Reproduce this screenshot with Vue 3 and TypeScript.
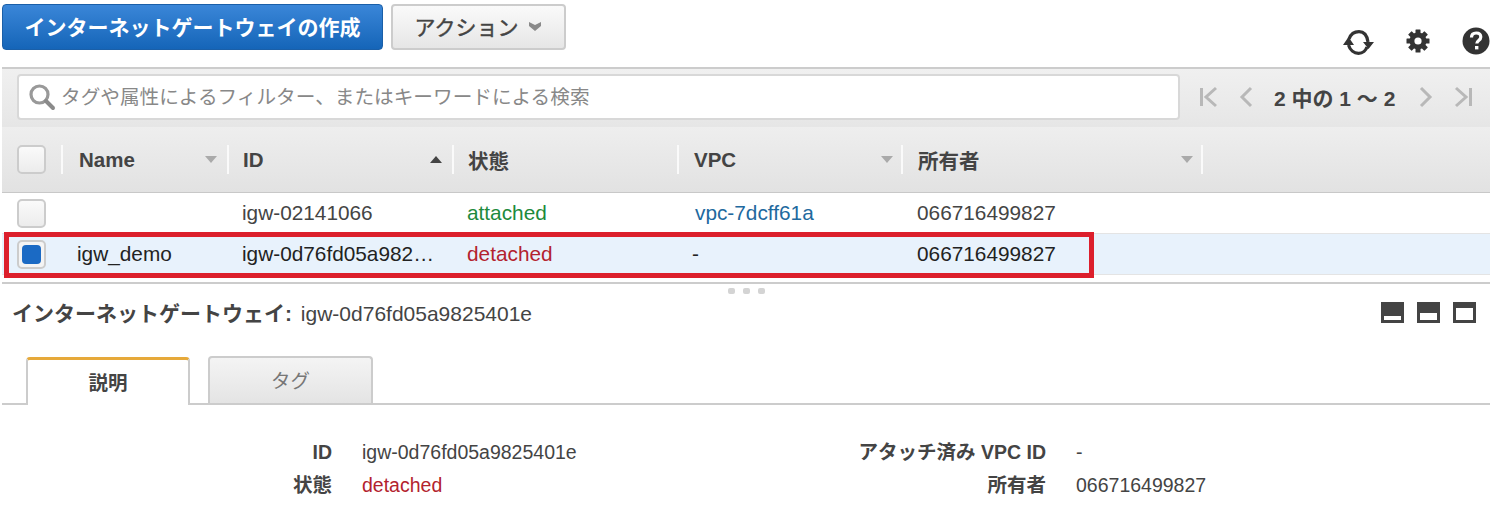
<template>
  <div class="page">
    <div class="toolbar">
      <button class="btn primary">インターネットゲートウェイの作成</button>
      <button class="btn plain">
        アクション
        <svg width="14" height="11" viewBox="0 0 14 11"><path d="M1 1 7 4l6-3v4l-6 5-6-5z" fill="#8a8a8a" /></svg>
      </button>
      <div class="tools">
        <svg class="refresh" width="31" height="25" viewBox="0 0 31 25" fill="none">
          <path d="M6 9C8 3.500 12 1.700 16 1.700c5 0 8 3.300 9 10.300" stroke="#333" stroke-width="3.200" />
          <path d="M5.500 15c1.500 5 5.500 8.300 10 8.300s7.500-3.300 8.500-6.300" stroke="#333" stroke-width="3.200" />
          <path d="M20 12h11l-5.500 7zM0 15h11L5.500 7z" fill="#333" />
        </svg>
        <svg class="gear" width="24" height="24" viewBox="0 0 24 24">
          <rect v-for="a in gearTeeth" :key="a" x="9.500" y="0.500" width="5" height="23" rx="0.500" fill="#333" :transform="`rotate(${a} 12 12)`" />
          <circle cx="12" cy="12" r="8.500" fill="#333" />
          <circle cx="12" cy="12" r="3.600" fill="#fff" />
        </svg>
        <svg class="help" width="28" height="28" viewBox="0 0 28 28">
          <circle cx="14" cy="14" r="13.500" fill="#333" />
          <path d="M9.500 10.500c0-3 2-4.500 4.700-4.500s4.600 1.500 4.600 4c0 3.600-4 3.400-4 6.500" fill="none" stroke="#fff" stroke-width="3.200" />
          <rect x="13" y="19" width="3.400" height="3.400" fill="#fff" />
        </svg>
      </div>
    </div>

    <div class="filter">
      <div class="search">
        <svg width="28" height="28" viewBox="0 0 28 28" fill="none">
          <circle cx="11.500" cy="11.500" r="8.500" stroke="#999" stroke-width="3.200" />
          <path d="M18 18l7 7" stroke="#8a8a8a" stroke-width="4" stroke-linecap="round" />
        </svg>
        <span>タグや属性によるフィルター、またはキーワードによる検索</span>
      </div>
      <div class="pager">
        <svg width="20" height="22" viewBox="0 0 20 22" fill="none" stroke="#b8b8b8" stroke-width="3"><path d="M2.500 2v18M17 2 7 11l10 9" /></svg>
        <svg class="prev" width="14" height="22" viewBox="0 0 14 22" fill="none" stroke="#b8b8b8" stroke-width="3"><path d="M12 2 3 11l9 9" /></svg>
        <b>2 中の 1 ～ 2</b>
        <svg class="next" width="14" height="22" viewBox="0 0 14 22" fill="none" stroke="#b8b8b8" stroke-width="3"><path d="m2 2 9 9-9 9" /></svg>
        <svg width="20" height="22" viewBox="0 0 20 22" fill="none" stroke="#b8b8b8" stroke-width="3"><path d="M17.500 2v18M3 2l10 9-10 9" /></svg>
      </div>
    </div>

    <div class="table">
      <div class="thead grid">
        <div class="cell check"><i class="box"></i></div>
        <div v-for="c in columns" :key="c.label" class="cell th">
          <span>{{ c.label }}</span>
          <i v-if="c.caret" class="caret" :class="c.caret"></i>
        </div>
      </div>
      <div v-for="r in rows" :key="r.id" class="grid row" :class="{ selected: r.selected }">
        <div class="cell check"><i class="box" :class="{ on: r.selected }"></i></div>
        <div class="cell name">{{ r.name }}</div>
        <div class="cell id">{{ r.id }}</div>
        <div class="cell state" :class="r.state">{{ r.state }}</div>
        <div class="cell vpc" :class="{ link: r.vpc !== '-' }">{{ r.vpc }}</div>
        <div class="cell owner">{{ r.owner }}</div>
      </div>
      <div class="highlight"></div>
    </div>

    <div class="split"><i></i><i></i><i></i></div>

    <div class="detail-head">
      <div class="title"><b>インターネットゲートウェイ:</b> igw-0d76fd05a9825401e</div>
      <div class="sizes">
        <i v-for="h in paneSizes" :key="h" class="size"><em :style="{ height: h + 'px' }"></em></i>
      </div>
    </div>

    <div class="tabs">
      <div class="tab active">説明</div>
      <div class="tab">タグ</div>
    </div>

    <div class="props">
      <div class="label">ID</div>
      <div>igw-0d76fd05a9825401e</div>
      <div class="label">アタッチ済み VPC ID</div>
      <div>-</div>
      <div class="label">状態</div>
      <div class="detached">detached</div>
      <div class="label">所有者</div>
      <div>066716499827</div>
    </div>
  </div>
</template>

<script setup lang="ts">
interface Row {
  name: string;
  id: string;
  state: string;
  vpc: string;
  owner: string;
  selected?: boolean;
}

const columns = [
  { label: "Name", caret: "down" },
  { label: "ID", caret: "up" },
  { label: "状態" },
  { label: "VPC", caret: "down" },
  { label: "所有者", caret: "down" },
];

const rows: Row[] = [
  { name: "", id: "igw-02141066", state: "attached", vpc: "vpc-7dcff61a", owner: "066716499827" },
  { name: "igw_demo", id: "igw-0d76fd05a9825401e", state: "detached", vpc: "-", owner: "066716499827", selected: true },
];

const gearTeeth = [0, 45, 90, 135];

// white slot height in each of the three pane-size buttons
const paneSizes = [4, 7, 12];
</script>

<style>
body {
  background: #fff;
}
</style>

<style scoped>
.page {
  width: 1499px;
  height: 518px;
  overflow: hidden;
  box-sizing: border-box;
  padding-left: 2px;
  font-family: "Liberation Sans", "Noto Sans CJK JP", sans-serif;
  color: #444;
}
.toolbar {
  display: flex;
  align-items: flex-start;
  gap: 8px;
  height: 63px;
  padding-top: 4px;
  width: 1488px;
}
.btn {
  height: 46px;
  border-radius: 4px;
  font-family: inherit;
  font-size: 21px;
  font-weight: 700;
  padding: 0 0 2px;
}
.primary {
  width: 381px;
  color: #fff;
  background: linear-gradient(#3a86d8, #1565b8);
  border: 1px solid #1a5fa8;
}
.plain {
  width: 175px;
  color: #444;
  font-weight: 400;
  -webkit-text-stroke: 0.4px #444;
  background: linear-gradient(#fafafa, #e6e6e6);
  border: 2px solid #ccc;
  display: flex;
  align-items: center;
  justify-content: center;
  gap: 10px;
}
.tools {
  margin-left: auto;
  display: flex;
  align-items: flex-start;
  gap: 32px;
  padding-top: 22px;
}
.refresh {
  margin-top: 4px;
}
.gear {
  margin-top: 3px;
}
.help {
  margin-top: 1px;
}
.filter {
  width: 1488px;
  height: 60px;
  box-sizing: border-box;
  border-top: 2px solid #ccc;
  background: linear-gradient(#f0f0f0, #e6e6e6);
  display: flex;
  align-items: flex-start;
  padding: 5px 0 0 15px;
}
.search {
  width: 1163px;
  height: 46px;
  box-sizing: border-box;
  background: #fff;
  border: 2px solid #d8d8d8;
  border-radius: 4px;
  display: flex;
  align-items: center;
  gap: 5px;
  padding-left: 9px;
  color: #888;
  font-size: 19.650px;
}
.search span {
  padding-bottom: 4px;
}
.pager {
  display: flex;
  align-items: center;
  height: 46px;
  margin-left: 19px;
}
.pager .prev {
  margin-left: 20px;
}
.pager b {
  margin: 0 24px 0 21px;
  font-size: 21px;
  color: #444;
  white-space: nowrap;
}
.pager .next {
  margin-right: 20px;
}
.table {
  position: relative;
  width: 1488px;
}
.grid {
  display: grid;
  grid-template-columns: 59px 166px 225px 225px 224px 302px 1fr;
  align-items: center;
}
.thead {
  height: 66px;
  box-sizing: border-box;
  background: linear-gradient(#eeeeee, #e2e2e2);
  border-bottom: 1px solid #c8c8c8;
}
.cell {
  min-width: 0;
  font-size: 20.800px;
  white-space: nowrap;
  overflow: hidden;
  text-overflow: ellipsis;
}
.th {
  height: 29px;
  display: flex;
  align-items: center;
  justify-content: space-between;
  box-sizing: border-box;
  border-left: 2px solid #fafafa;
  padding: 0 10px 0 15px;
  font-size: 20.500px;
  font-weight: 700;
}
.th:nth-child(2) {
  padding-left: 16px;
}
.th:nth-child(3),
.th:nth-child(4) {
  padding-left: 14px;
}
.th:nth-child(5) {
  padding-right: 8px;
}
.th:nth-child(6) {
  border-right: 2px solid #fafafa;
  padding-right: 8px;
}
.caret {
  width: 0;
  height: 0;
  border: 6px solid transparent;
  border-top: 7px solid #aaa;
  border-bottom: 0;
}
.caret.up {
  border-top: 0;
  border-bottom: 7px solid #444;
}
.check {
  padding-left: 15px;
  display: flex;
  overflow: visible;
}
.box {
  width: 29px;
  height: 29px;
  box-sizing: border-box;
  border: 2px solid #ccc;
  border-radius: 5px;
  background: linear-gradient(#fafafa, #ececec);
  position: relative;
}
.box.on {
  background: #f4f4f4;
}
.box.on::after {
  content: "";
  position: absolute;
  inset: 3px;
  background: #1b6ac4;
  border-radius: 4px;
}
.row {
  height: 41px;
  box-sizing: border-box;
  border-bottom: 1px solid #e4e4e4;
  color: #444;
}
.row.selected {
  background: #e8f2fc;
  color: #222;
}
.name {
  padding-left: 16px;
}
.id {
  padding: 0 15px;
}
.state {
  padding-left: 15px;
}
.vpc {
  padding-left: 15px;
}
.vpc.link {
  padding-left: 18px;
}
.owner {
  padding-left: 16px;
}
.attached {
  color: #1d8a3c;
}
.detached {
  color: #b3222e;
}
.link {
  color: #21699e;
}
.highlight {
  position: absolute;
  left: 2px;
  top: 105px;
  width: 1090px;
  height: 46px;
  box-sizing: border-box;
  border: 5px solid #dc1f2c;
  pointer-events: none;
}
.split {
  width: 1488px;
  margin-top: 7px;
  height: 2px;
  border-top: 2px solid #ccc;
  display: flex;
  justify-content: center;
  gap: 8px;
  padding-top: 4px;
}
.split i {
  width: 7px;
  height: 6px;
  flex: none;
  border-radius: 2px;
  background: #d4d4d4;
}
.detail-head {
  width: 1474px;
  height: 66px;
  display: flex;
  justify-content: space-between;
  align-items: flex-start;
  padding: 7px 0 0 10px;
  box-sizing: border-box;
}
.title {
  font-size: 21px;
  color: #444;
  white-space: nowrap;
}
.title b {
  margin-right: 3px;
}
.sizes {
  display: flex;
  gap: 13px;
  padding-top: 5px;
}
.size {
  width: 23px;
  height: 21px;
  background: #444;
  position: relative;
}
.size em {
  position: absolute;
  left: 3px;
  right: 3px;
  bottom: 3px;
  background: #fff;
}
.tabs {
  display: flex;
  gap: 18px;
  align-items: flex-end;
  width: 1488px;
  height: 49px;
  box-sizing: border-box;
  padding-left: 24px;
  border-bottom: 2px solid #ccc;
}
.tab {
  width: 165px;
  height: 47px;
  box-sizing: border-box;
  display: flex;
  align-items: center;
  justify-content: center;
  background: linear-gradient(#f4f4f4, #e4e4e4);
  border: 2px solid #ccc;
  border-bottom: 0;
  border-radius: 4px 4px 0 0;
  padding-bottom: 3px;
  font-size: 19.500px;
  color: #777;
}
.tab.active {
  width: 164px;
  height: 48px;
  background: #fff;
  border-top: 3px solid #e6a93a;
  color: #444;
  font-weight: 700;
  margin-bottom: -2px;
}
.props {
  display: grid;
  grid-template-columns: 330px 466px 188px 1fr;
  column-gap: 30px;
  row-gap: 13px;
  padding-top: 37px;
  font-size: 19.500px;
  line-height: 20px;
}
.label {
  text-align: right;
  font-weight: 700;
  color: #444;
  white-space: nowrap;
}
</style>
